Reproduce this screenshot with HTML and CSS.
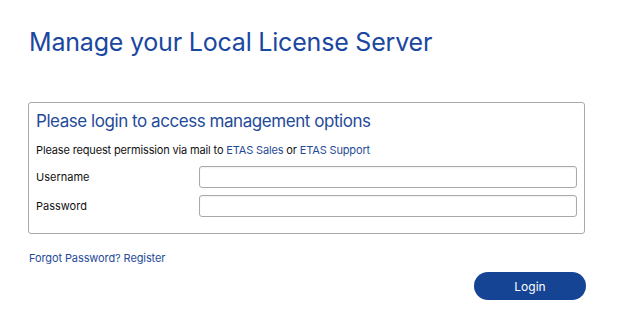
FILE: index.html
```html
<!DOCTYPE html>
<html lang="en">
<head>
<meta charset="utf-8">
<title>Manage your Local License Server</title>
<link rel="stylesheet" href="styles.css">
</head>
<body>
<main class="page">
  <h1 class="title">Manage your Local License Server</h1>
  <section class="panel">
    <h2 class="panel-title">Please login to access management options</h2>
    <p class="note">Please request permission via mail to <a href="#" class="link">ETAS Sales</a> or <a href="#" class="link">ETAS Support</a></p>
    <div class="row">
      <label class="label" for="user">Username</label>
      <input class="input" id="user" type="text">
    </div>
    <div class="row">
      <label class="label" for="pass">Password</label>
      <input class="input" id="pass" type="password">
    </div>
  </section>
  <div class="footer">
    <a href="#" class="link small">Forgot Password? Register</a>
  </div>
  <div class="actions">
    <button class="btn" type="button">Login</button>
  </div>
</main>
</body>
</html>
```

FILE: styles.css
```css
* { box-sizing: border-box; }
html, body { margin: 0; padding: 0; background: #ffffff; }
body { font-family: Inter, "Noto Sans", sans-serif; color: #111; }
.page { padding: 26px 35px 0 28px; }
.title {
  margin: 0 0 0 1px;
  font-size: 25px;
  font-weight: 400;
  color: #1a47a0;
  line-height: 32px;
  letter-spacing: -0.2px;
}
.panel {
  margin-top: 44px;
  border: 1px solid #a9a9a9;
  border-radius: 3px;
  padding: 7px 7px 16px 7px;
}
.panel-title {
  margin: 0;
  font-size: 17px;
  font-weight: 400;
  color: #1f4b99;
  line-height: 22px;
  letter-spacing: -0.45px;
}
.note {
  margin: 10px 0 8px 0;
  font-size: 11px;
  line-height: 16px;
  letter-spacing: -0.15px;
}
.link { color: #1f4b99; text-decoration: none; }
.row {
  display: flex;
  align-items: center;
  margin-top: 7px;
}
.label {
  width: 163px;
  font-size: 11px;
}
.input {
  flex: 1;
  height: 22px;
  border: 1px solid #a9a9a9;
  border-radius: 3px;
  background: #fff;
  box-shadow: inset 0 1px 2px rgba(0,0,0,0.06);
  font: inherit;
  padding: 0 4px;
}
.footer { margin-top: 12px; padding-left: 1px; }
.small { font-size: 11px; line-height: 16px; letter-spacing: -0.1px; }
.actions {
  display: flex;
  justify-content: flex-end;
  margin-top: 6px;
  margin-right: -1px;
}
.btn {
  width: 112px;
  height: 28px;
  border: 0;
  border-radius: 14px;
  background: #164494;
  color: #fff;
  font-family: Inter, "Noto Sans", sans-serif;
  font-size: 12px;
  cursor: pointer;
}
```
